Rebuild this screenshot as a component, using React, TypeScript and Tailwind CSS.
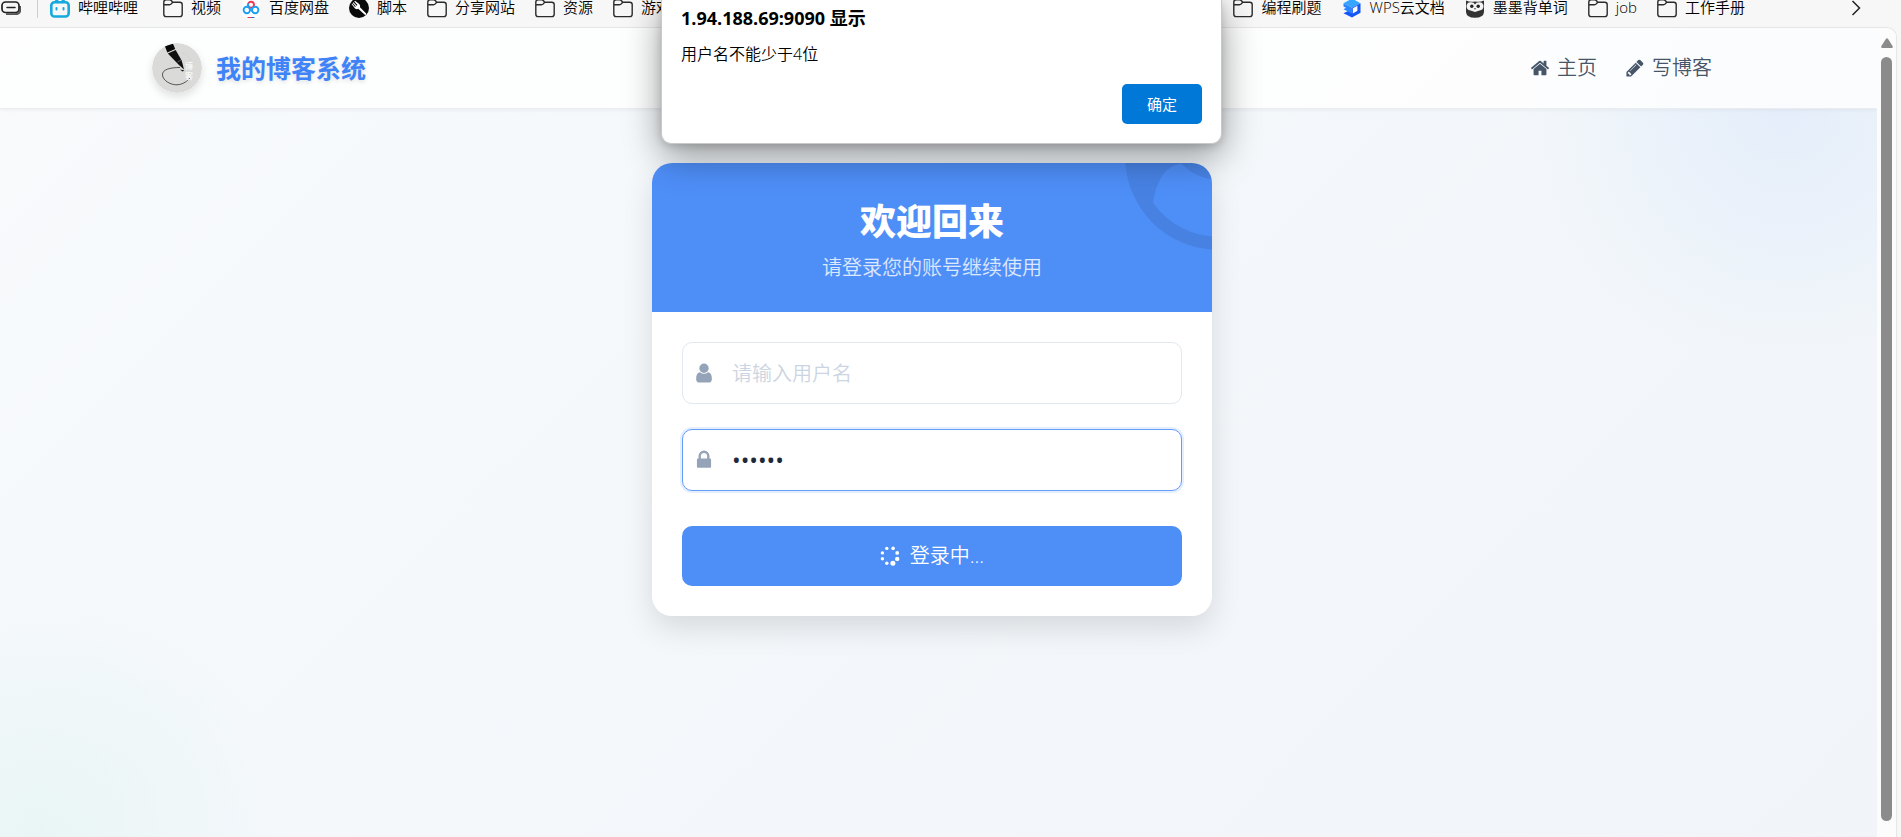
import React, { useState } from 'react';

interface IconProps {
  className?: string;
}

interface BookmarkItem {
  label: string;
  icon: React.FC<IconProps>;
  className?: string;
}

const HomeIcon: React.FC<IconProps> = ({ className }) => (
  <svg viewBox="0 0 1792 1792" fill="currentColor" className={className} aria-hidden="true">
    <path d="M1472 992v480q0 26-19 45t-45 19h-384v-384h-256v384h-384q-26 0-45-19t-19-45v-480q0-1 .5-3t.5-3l575-474 575 474q1 2 1 6zm223-69l-62 74q-8 9-21 11h-3q-13 0-21-7l-692-577-692 577q-12 8-24 7-13-2-21-11l-62-74q-8-10-7-23.5t11-21.5l719-599q32-26 76-26t76 26l244 204v-195q0-14 9-23t23-9h192q14 0 23 9t9 23v408l219 182q10 8 11 21.5t-7 23.5z" />
  </svg>
);

const PencilIcon: React.FC<IconProps> = ({ className }) => (
  <svg viewBox="0 0 1792 1792" fill="currentColor" className={className} aria-hidden="true">
    <path d="M491 1536l91-91-235-235-91 91v107h128v128h107zm523-928q0-22-22-22-10 0-17 7l-542 542q-7 7-7 17 0 22 22 22 10 0 17-7l542-542q7-7 7-17zm-54-192l416 416-832 832h-416v-416zm683 96q0 53-37 90l-166 166-416-416 166-165q36-38 90-38 53 0 91 38l235 234q37 39 37 91z" />
  </svg>
);

const UserIcon: React.FC<IconProps> = ({ className }) => (
  <svg viewBox="0 0 1792 1792" fill="currentColor" className={className} aria-hidden="true">
    <path d="M1536 1399q0 109-62.5 187t-150.5 78h-854q-88 0-150.5-78t-62.5-187q0-85 8.5-160.5t31.5-152 58.5-131 94-89 134.5-34.5q131 128 313 128t313-128q76 0 134.5 34.5t94 89 58.5 131 31.5 152 8.5 160.5zm-256-887q0 159-112.5 271.5t-271.5 112.5-271.5-112.5-112.5-271.5 112.5-271.5 271.5-112.5 271.5 112.5 112.5 271.5z" />
  </svg>
);

const LockIcon: React.FC<IconProps> = ({ className }) => (
  <svg viewBox="0 0 1792 1792" fill="currentColor" className={className} aria-hidden="true">
    <path d="M640 768h512v-192q0-106-75-181t-181-75-181 75-75 181v192zm832 96v576q0 40-28 68t-68 28h-960q-40 0-68-28t-28-68v-576q0-40 28-68t68-28h32v-192q0-184 132-316t316-132 316 132 132 316v192h32q40 0 68 28t28 68z" />
  </svg>
);

const UserCircleIcon: React.FC<IconProps> = ({ className }) => (
  <svg viewBox="0 0 1792 1792" fill="currentColor" className={className} aria-hidden="true">
    <path d="M1523 1339q-22-155-87.5-257.5t-184.5-118.5q-67 74-159.5 115.5t-195.5 41.5-195.5-41.5-159.5-115.5q-119 16-184.5 118.5t-87.5 257.5q106 150 271 237.5t356 87.5 356-87.5 271-237.5zm-243-699q0-159-112.5-271.5t-271.5-112.5-271.5 112.5-112.5 271.5 112.5 271.5 271.5 112.5 271.5-112.5 112.5-271.5zm512 256q0 182-71 347.5t-190.5 286-285.5 191.5-349 71q-182 0-348-71t-286-191-191-286-71-348 71-348 191-286 286-191 348-71 348 71 286 191 191 286 71 348z" />
  </svg>
);

const SpinnerIcon: React.FC<IconProps> = ({ className }) => (
  <svg viewBox="0 0 20 20" fill="currentColor" className={className} aria-hidden="true">
    <circle cx="6.8" cy="2.4" r="1.7" />
    <circle cx="13.1" cy="2.4" r="1.8" />
    <circle cx="17.2" cy="6.9" r="1.9" />
    <circle cx="17.2" cy="12.9" r="2.2" />
    <circle cx="12.9" cy="17.2" r="2.5" />
    <circle cx="6.8" cy="17.2" r="1.7" />
    <circle cx="2.4" cy="12.8" r="1.7" />
    <circle cx="2.4" cy="6.9" r="1.7" />
  </svg>
);

const FolderIcon: React.FC<IconProps> = ({ className }) => (
  <svg viewBox="0 0 20 20" fill="none" stroke="#2b2b2b" strokeWidth="1.4" className={className} aria-hidden="true">
    <path d="M.8 4.2C.8 2.700 1.800 1.800 3.200 1.800H6.600C7.500 1.800 8 2.100 8.500 2.800L9.700 4.200H16.800C18.300 4.200 19.200 5.200 19.200 6.600V16.200C19.200 17.700 18.300 18.600 16.800 18.600H3.200C1.700 18.600.8 17.700.8 16.200ZM.8 6.800H6.400C7.200 6.800 7.800 6.500 8.300 5.900L9.700 4.200" />
  </svg>
);

const TabIcon: React.FC<IconProps> = ({ className }) => (
  <svg viewBox="0 0 20 20" fill="none" className={className} aria-hidden="true">
    <path d="M5 16.200H14C17.500 16.200 19.500 14.500 19.500 11V8" stroke="#555" strokeWidth="1.800" />
    <rect x="1" y="4" width="17" height="10.500" rx="3.500" stroke="#222" strokeWidth="1.700" />
    <path d="M6 9.500H14" stroke="#222" strokeWidth="1.500" strokeLinecap="round" />
  </svg>
);

const BilibiliIcon: React.FC<IconProps> = ({ className }) => (
  <svg viewBox="0 0 20 20" fill="none" stroke="#16a9dd" strokeWidth="2.600" strokeLinecap="round" className={className} aria-hidden="true">
    <path d="M5.500 1L8 4M14.500 1L12 4" />
    <rect x="1.300" y="4.200" width="17.400" height="14.300" rx="3.200" />
    <path d="M6.500 10V11.500M13.500 10V11.500" strokeWidth="2" />
  </svg>
);

const BaiduIcon: React.FC<IconProps> = ({ className }) => (
  <svg viewBox="0 0 20 20" fill="none" className={className} aria-hidden="true">
    <rect x="1" y="0" width="18" height="20" rx="4" fill="#fff" />
    <circle cx="10" cy="6.800" r="3" stroke="#ee3b55" strokeWidth="1.900" />
    <circle cx="5.800" cy="12" r="3.200" stroke="#1ba0f5" strokeWidth="1.900" />
    <circle cx="14.200" cy="12" r="3.200" stroke="#1ba0f5" strokeWidth="1.900" />
    <path d="M8 10L12 14M8 8.800A2.800 2.800 0 0 1 7.500 5.500" stroke="#1ba0f5" strokeWidth="1.400" />
    <path d="M6.500 20V19H10V20Z" fill="#e33a56" />
    <path d="M10 20V19H13.500V20Z" fill="#2b6be0" />
  </svg>
);

const ScriptIcon: React.FC<IconProps> = ({ className }) => (
  <svg viewBox="0 0 20 20" className={className} aria-hidden="true">
    <circle cx="10" cy="10" r="10" fill="#0a0a0a" />
    <path d="M2.500 6L5.800 10.200Q7.600 11.700 9.200 10.800L15.800 16.800Q17.300 17.300 17.200 15.600L11 9.200Q11.600 7.400 10.200 6L6 2.800L5.300 3.600L8.400 7L7.600 7.700L4.500 4.300L3.800 5L6.800 8.400L6 9L3.200 5.400Z" fill="#fff" />
  </svg>
);

const WpsIcon: React.FC<IconProps> = ({ className }) => (
  <svg viewBox="0 0 20 20" className={className} aria-hidden="true">
    <path d="M1.500 5.200L10 .5L18.500 5.200L10 9.800Z" fill="#35a5ff" />
    <path d="M18.500 5.200V14.800L10 19.600L1.500 15.200L6 13L10 9.800Z" fill="#1557f5" />
    <path d="M1.500 5.200L10 9.800V15.500L1.500 11.200L4 9.700L1.500 8.400Z" fill="#2e86ff" />
    <path d="M10.800 10.300L15.400 7.800V12.800L10.800 15.400Z" fill="#fff" />
  </svg>
);

const OwlIcon: React.FC<IconProps> = ({ className }) => (
  <svg viewBox="0 0 20 20" className={className} aria-hidden="true">
    <path d="M1 2.500Q5 4.500 10 3.500Q15 4.500 19 2.500V14Q18.500 19.800 10 19.800Q1.500 19.800 1 14Z" fill="#333" />
    <path d="M1.500 8Q2 3.800 6 4.200Q9 4.200 10 6.500Q11 4.200 14 4.200Q18 3.800 18.500 8Q18.500 12 14.500 12.500L10 14L5.500 12.500Q1.500 12 1.500 8Z" fill="#f4f4f4" />
    <circle cx="6.800" cy="8.200" r="1.700" fill="#222" />
    <circle cx="13.200" cy="8.200" r="1.700" fill="#222" />
    <path d="M9 10H11L10 12Z" fill="#555" />
  </svg>
);

const BlogLogo: React.FC<IconProps> = ({ className }) => (
  <svg viewBox="0 0 50 50" className={className} aria-hidden="true">
    <circle cx="25" cy="25" r="25" fill="#dadad9" />
    <path d="M29 9.500Q39 12 40 22" fill="none" stroke="#cfcfce" strokeWidth=".5" />
    <path d="M28 24.500C18 24.500 10 26.500 10.500 32C11 38 19 42 25 41.800C31 41.500 36 38 38.500 34" fill="none" stroke="#333" strokeWidth=".8" />
    <path d="M13 3.200L21 .8L23.200 6L15.300 9.600Z" fill="#080808" />
    <path d="M15.800 10.600L23.700 7L29.500 17.200Q30.500 20 32 26.500Q28 23 25.500 20.500Z" fill="#111" />
    <path d="M25.500 19L29 17" stroke="#999" strokeWidth=".6" />
    <path d="M28 26.500L32.500 27.500L30.500 28.600Z" fill="#111" />
    <g fill="#f6f6f6" fontFamily="'Noto Sans CJK SC', sans-serif" fontSize="8" fontWeight="700">
      <text x="33" y="26">博</text>
      <text x="33" y="36">客</text>
    </g>
  </svg>
);

const leftBookmarks: BookmarkItem[] = [
  { label: '哔哩哔哩', icon: BilibiliIcon, className: 'mr-[5px]' },
  { label: '视频', icon: FolderIcon },
  { label: '百度网盘', icon: BaiduIcon },
  { label: '脚本', icon: ScriptIcon },
  { label: '分享网站', icon: FolderIcon },
  { label: '资源', icon: FolderIcon },
  { label: '游戏', icon: FolderIcon }
];

const rightBookmarks: BookmarkItem[] = [
  { label: '编程刷题', icon: FolderIcon },
  { label: 'WPS云文档', icon: WpsIcon },
  { label: '墨墨背单词', icon: OwlIcon },
  { label: 'job', icon: FolderIcon },
  { label: '工作手册', icon: FolderIcon }
];

const Bookmark: React.FC<{ item: BookmarkItem }> = ({ item }) => {
  const Icon = item.icon;
  return (
    <a href="#" className={`flex shrink-0 items-center gap-2 ${item.className ?? ''}`}>
      <Icon className="size-5 shrink-0" />
      <span>{item.label}</span>
    </a>
  );
};

const BookmarkBar: React.FC = () => (
  <nav className="flex h-[27px] items-center gap-5 pb-3 text-[15px] leading-[15px] font-[350] whitespace-nowrap text-black">
    <div className="flex items-center gap-4">
      <TabIcon className="ml-px size-5" />
      <span className="h-5 w-px bg-[#cfcfcf]" />
    </div>
    <div className="-ml-2 flex items-center gap-5">
      {leftBookmarks.map((item) => (
        <Bookmark key={item.label} item={item} />
      ))}
    </div>
    <div className="ml-auto flex items-center gap-5">
      {rightBookmarks.map((item) => (
        <Bookmark key={item.label} item={item} />
      ))}
    </div>
    <button className="mr-10 ml-[86px] shrink-0" aria-label="更多书签">
      <svg viewBox="0 0 10 16" fill="none" stroke="#222" strokeWidth="1.500" className="h-4 w-[10px]">
        <path d="M1.500 1L8.500 8L1.500 15" />
      </svg>
    </button>
  </nav>
);

const SiteHeader: React.FC = () => (
  <header className="border-b border-[#e9edf2] bg-white/80 pr-[13px] shadow-[0_1px_4px_rgba(0,0,0,0.05)]">
    <div className="mx-auto flex h-20 max-w-[1560px] items-center justify-between">
      <a href="#" className="flex items-center gap-[14px]">
        <BlogLogo className="size-[50px] rounded-full shadow-[0_4px_8px_rgba(0,0,0,0.12)]" />
        <span className="pt-[2px] text-[25px] font-bold text-[#3f83f8] [text-shadow:0_2px_4px_rgba(0,0,0,0.12)]">我的博客系统</span>
      </a>
      <nav className="flex items-center gap-7 text-xl font-[350] text-[#475569]">
        <a href="#" className="flex items-center gap-[7px]">
          <HomeIcon className="size-5" />
          主页
        </a>
        <a href="#" className="flex items-center gap-[7px]">
          <PencilIcon className="size-5" />
          写博客
        </a>
      </nav>
    </div>
  </header>
);

const LoginCard: React.FC = () => {
  const [username, setUsername] = useState('');
  const [password, setPassword] = useState('123456');

  return (
    <section className="w-full max-w-[560px] overflow-hidden rounded-[20px] bg-white shadow-[0_12px_30px_rgba(0,0,0,0.12)]">
      <div className="relative overflow-hidden bg-[#4e8ef7] px-8 pt-[31px] pb-[26px] text-center text-white">
        <UserCircleIcon className="absolute -top-[100px] -right-[100px] size-[187px] text-black/8" />
        <h1 className="text-4xl leading-[56px] font-black">欢迎回来</h1>
        <p className="text-xl leading-9 font-[350] text-white/80">请登录您的账号继续使用</p>
      </div>
      <form className="flex flex-col p-[30px]" onSubmit={(e) => e.preventDefault()}>
        <label className="flex h-[62px] items-center rounded-[10px] border border-[#e2e8f0] bg-white pr-4 pl-[10px]">
          <UserIcon className="size-[22px] shrink-0 text-[#94a3b8]" />
          <input
            type="text"
            value={username}
            onChange={(e) => setUsername(e.target.value)}
            placeholder="请输入用户名"
            aria-label="用户名"
            className="ml-[17px] h-full w-full text-xl font-[350] text-[#1e293b] outline-none placeholder:text-[#cbd5e1]"
          />
        </label>
        <label className="mt-[25px] flex h-[62px] items-center rounded-[10px] border border-[#639df8] bg-white pr-4 pl-[10px] shadow-[0_0_0_2px_rgba(78,142,247,0.15)]">
          <LockIcon className="size-[22px] shrink-0 text-[#94a3b8]" />
          <input
            type="password"
            value={password}
            onChange={(e) => setPassword(e.target.value)}
            aria-label="密码"
            className="ml-[17px] h-full w-full text-[23px] text-[#1e293b] outline-none"
          />
        </label>
        <button
          type="submit"
          className="mt-[35px] flex h-[60px] items-center justify-center gap-[10px] rounded-[10px] bg-[#4e8ef7] text-xl font-[350] text-white"
        >
          <SpinnerIcon className="size-5" />
          登录中...
        </button>
      </form>
    </section>
  );
};

const AlertDialog: React.FC = () => (
  <div className="absolute inset-x-0 top-0 flex justify-center pr-[18px]">
    <div
      role="alertdialog"
      aria-labelledby="alert-title"
      className="flex w-[561px] flex-col rounded-b-[10px] border border-t-0 border-[#c9c9c9] bg-white px-[19px] pt-[5px] pb-[19px] text-black shadow-[0_12px_36px_rgba(0,0,0,0.4),0_2px_8px_rgba(0,0,0,0.15)]"
    >
      <h2 id="alert-title" className="text-lg leading-[26px] font-bold">
        1.94.188.69:9090 显示
      </h2>
      <p className="mt-[11px] text-base leading-6 font-[350]">用户名不能少于4位</p>
      <button className="mt-[18px] h-10 w-20 self-end rounded-[5px] bg-[#0078d7] text-[15px] text-white">确定</button>
    </div>
  </div>
);

const Scrollbar: React.FC = () => (
  <div className="flex w-[19px] shrink-0 flex-col items-center bg-[#fcfcfc] pt-[10px] pb-4">
    <svg viewBox="0 0 12 10" fill="#8b8b8b" className="h-[10px] w-3">
      <path d="M5 .8Q6 -.3 7 .8L11.700 8.200Q12.200 10 10.800 10H1.200Q-.2 10 .3 8.200Z" />
    </svg>
    <div className="mt-[9px] w-[11px] flex-1 rounded-full bg-[#8b8b8b]" />
  </div>
);

const App: React.FC = () => {
  return (
    <div className="relative flex min-h-screen flex-col overflow-hidden bg-[#f7f7f7] font-['Open_Sans','Noto_Sans_CJK_SC',sans-serif]">
      <BookmarkBar />
      <div className="mr-1 flex flex-1 overflow-hidden rounded-tr-[10px] border-t border-r border-[#e6e6e6]">
        <div className="flex flex-1 flex-col bg-[radial-gradient(circle_260px_at_95%_10%,rgba(59,130,246,0.08),transparent),radial-gradient(circle_250px_at_2%_99%,rgba(16,185,129,0.05),transparent),linear-gradient(135deg,#f8fafc,#f4f8fb_40%,#f1f5f9)]">
          <SiteHeader />
          <main className="flex flex-1 flex-col items-center pt-[54px] pr-[13px]">
            <LoginCard />
          </main>
        </div>
        <Scrollbar />
      </div>
      <AlertDialog />
    </div>
  );
};

export default App;
